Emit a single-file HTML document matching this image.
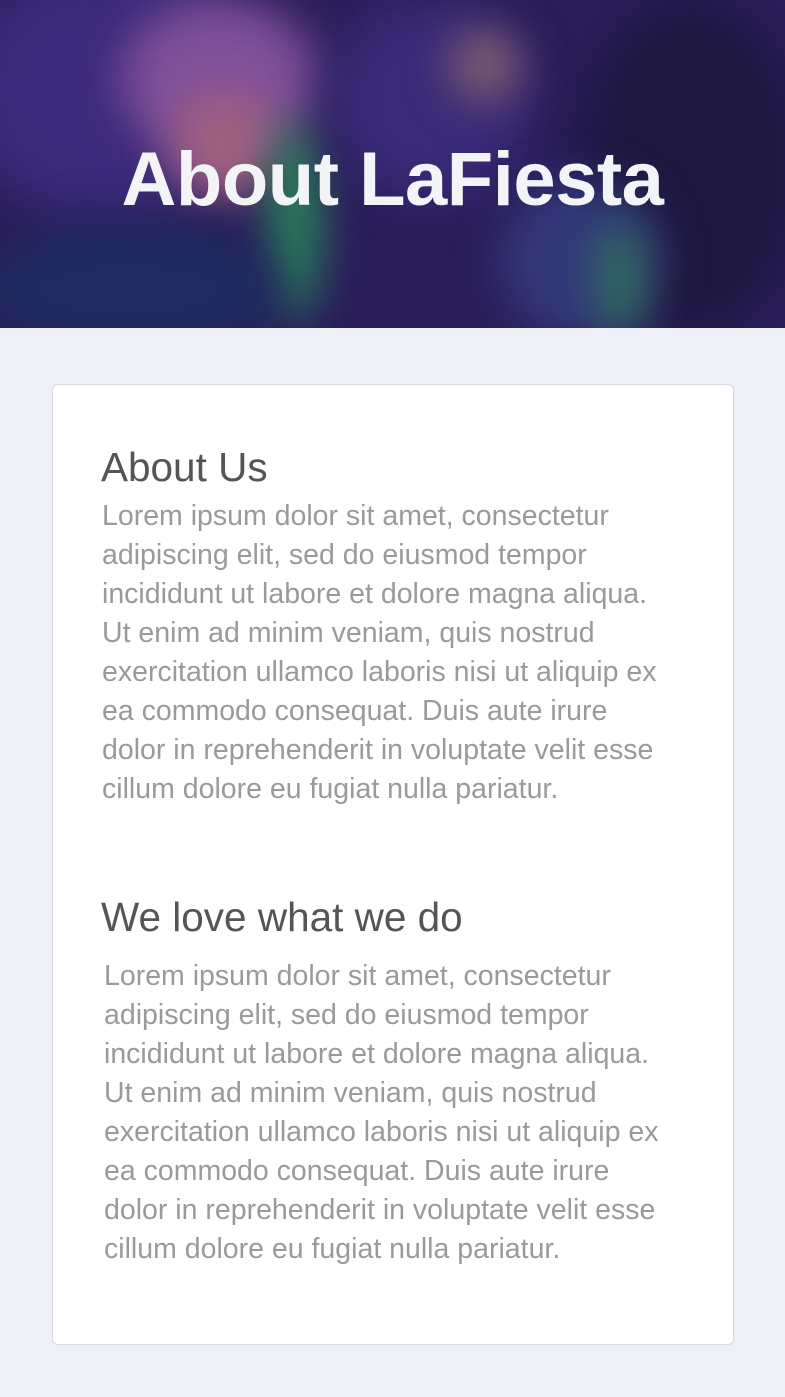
<!DOCTYPE html>
<html><head><meta charset="utf-8"><style>
html,body{margin:0;padding:0}
body{width:785px;height:1397px;background:#efeff8;font-family:"Liberation Sans",sans-serif;overflow:hidden;position:relative}
.hero{position:absolute;left:0;top:0;width:785px;height:328px;overflow:hidden;background:#2a1d5a}
.blob{position:absolute;border-radius:50%;filter:blur(22px)}
.hero h1{position:absolute;left:0;right:0;top:136px;margin:0;text-align:center;color:#f3f4f7;font-size:76px;font-weight:bold;letter-spacing:-0.5px;line-height:88px}
.card{position:absolute;left:52px;top:384px;width:680px;height:959px;background:#fff;border:1px solid #d8d8e0;border-radius:6px}
h2{position:absolute;margin:0;font-weight:normal;color:#555;font-size:40.5px;line-height:44px}
p{position:absolute;margin:0;color:#9a9a9a;font-size:28.5px;line-height:39px;white-space:nowrap;letter-spacing:0}
</style></head><body>
<div class="hero">
<div class="blob" style="left:-40px;top:-40px;width:300px;height:260px;background:#3c2a7a"></div>
<div class="blob" style="left:120px;top:0px;width:200px;height:160px;background:#80509a"></div>
<div class="blob" style="left:170px;top:90px;width:110px;height:110px;background:#a06080"></div>
<div class="blob" style="left:270px;top:120px;width:50px;height:200px;background:#2a8a5a"></div>
<div class="blob" style="left:330px;top:0px;width:200px;height:200px;background:#3a2a78"></div>
<div class="blob" style="left:450px;top:30px;width:70px;height:70px;background:#806070"></div>
<div class="blob" style="left:580px;top:0px;width:220px;height:330px;background:#1e1840"></div>
<div class="blob" style="left:-20px;top:220px;width:300px;height:140px;background:#1e2a60"></div>
<div class="blob" style="left:500px;top:180px;width:160px;height:160px;background:#33387a"></div>
<div class="blob" style="left:600px;top:220px;width:40px;height:120px;background:#2f7a58"></div>
<h1>About LaFiesta</h1>
</div>
<div class="card">
<h2 style="left:48px;top:60px">About Us</h2>
<p style="left:49px;top:112px">Lorem ipsum dolor sit amet, consectetur<br>adipiscing elit, sed do eiusmod tempor<br>incididunt ut labore et dolore magna aliqua.<br>Ut enim ad minim veniam, quis nostrud<br>exercitation ullamco laboris nisi ut aliquip ex<br>ea commodo consequat. Duis aute irure<br>dolor in reprehenderit in voluptate velit esse<br>cillum dolore eu fugiat nulla pariatur.</p>
<h2 style="left:48px;top:510px">We love what we do</h2>
<p style="left:51px;top:572px">Lorem ipsum dolor sit amet, consectetur<br>adipiscing elit, sed do eiusmod tempor<br>incididunt ut labore et dolore magna aliqua.<br>Ut enim ad minim veniam, quis nostrud<br>exercitation ullamco laboris nisi ut aliquip ex<br>ea commodo consequat. Duis aute irure<br>dolor in reprehenderit in voluptate velit esse<br>cillum dolore eu fugiat nulla pariatur.</p>
</div>
</body></html>
